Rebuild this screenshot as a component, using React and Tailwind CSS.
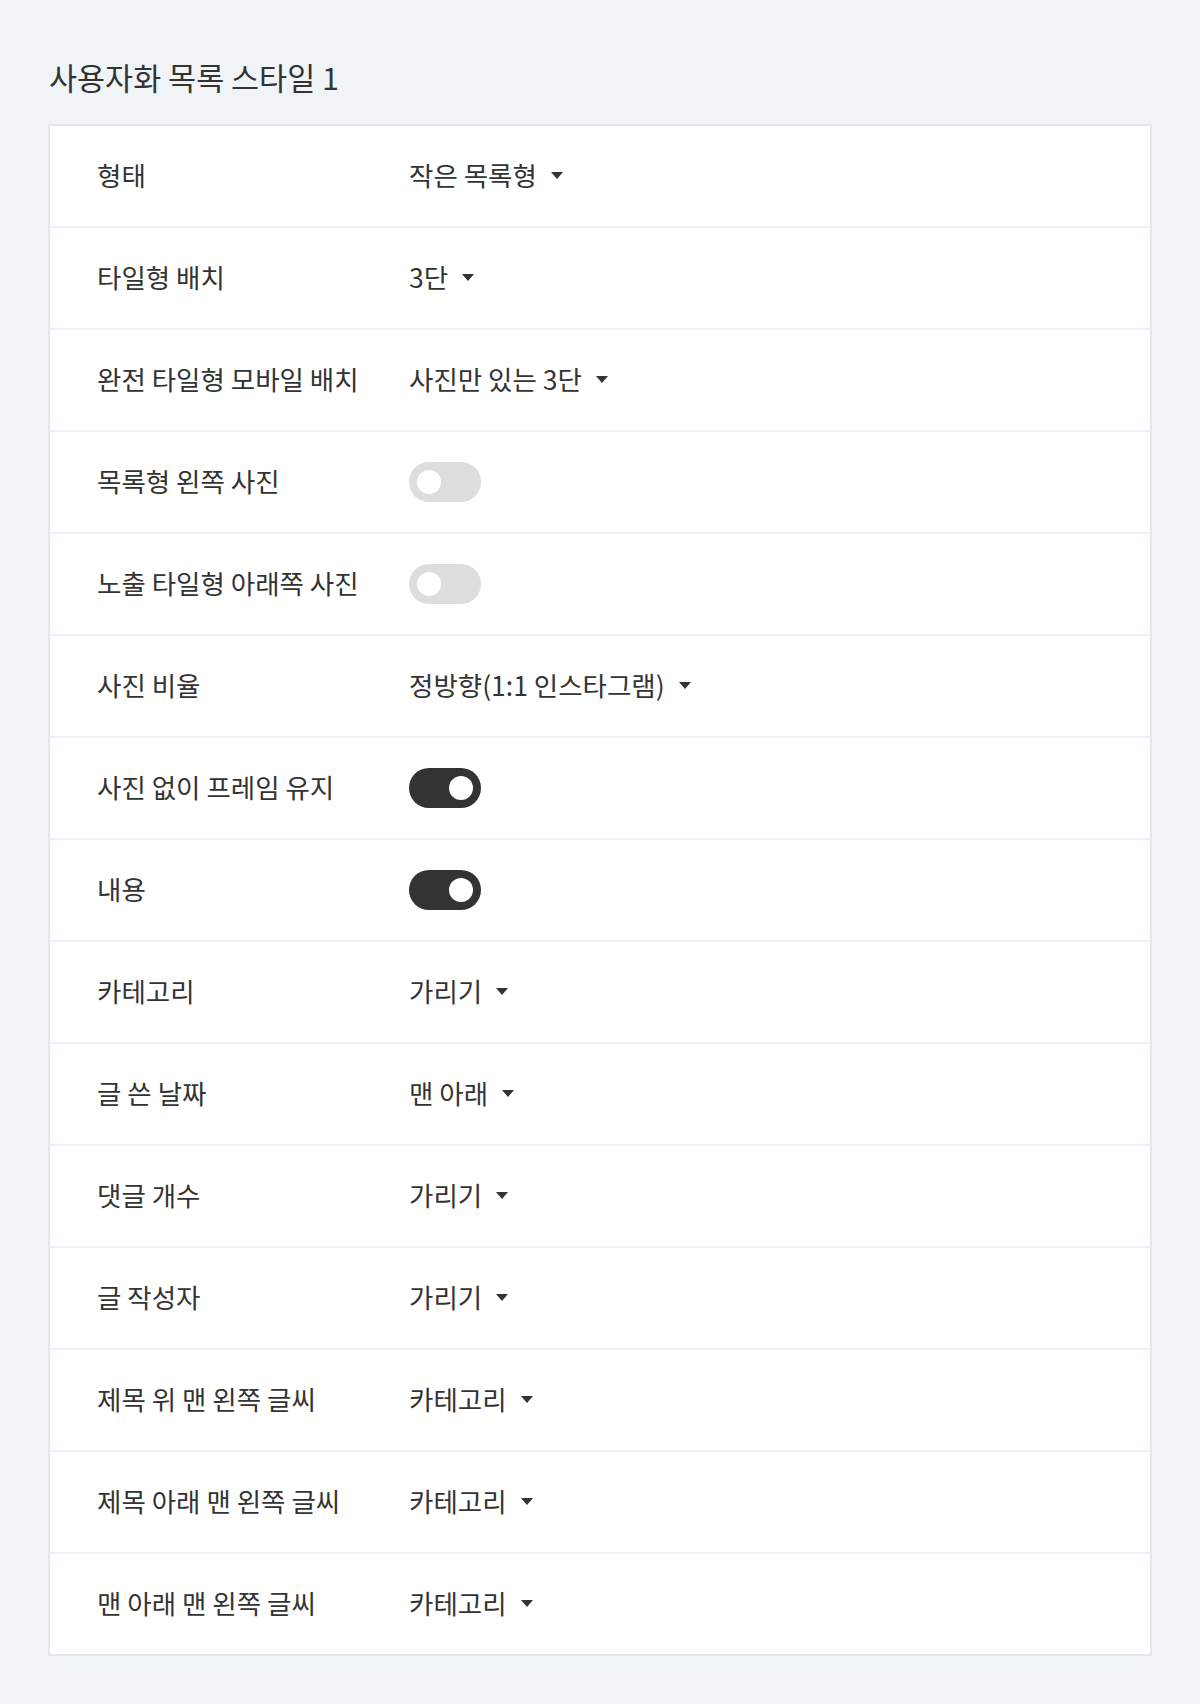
const rows = [
  { label: "형태", type: "select", value: "작은 목록형" },
  { label: "타일형 배치", type: "select", value: "3단" },
  { label: "완전 타일형 모바일 배치", type: "select", value: "사진만 있는 3단" },
  { label: "목록형 왼쪽 사진", type: "toggle", on: false },
  { label: "노출 타일형 아래쪽 사진", type: "toggle", on: false },
  { label: "사진 비율", type: "select", value: "정방향(1:1 인스타그램)" },
  { label: "사진 없이 프레임 유지", type: "toggle", on: true },
  { label: "내용", type: "toggle", on: true },
  { label: "카테고리", type: "select", value: "가리기" },
  { label: "글 쓴 날짜", type: "select", value: "맨 아래" },
  { label: "댓글 개수", type: "select", value: "가리기" },
  { label: "글 작성자", type: "select", value: "가리기" },
  { label: "제목 위 맨 왼쪽 글씨", type: "select", value: "카테고리" },
  { label: "제목 아래 맨 왼쪽 글씨", type: "select", value: "카테고리" },
  { label: "맨 아래 맨 왼쪽 글씨", type: "select", value: "카테고리" },
];

const Caret = () => (
  <svg width="12" height="7" viewBox="0 0 12 7" className="ml-[14px] mt-[2px]">
    <path d="M0 0 H12 L6 7 Z" fill="#333333" />
  </svg>
);

const Toggle = ({ on }) => (
  <div
    className={
      on
        ? "w-[72px] h-[40px] rounded-full bg-[#333333] flex items-center justify-end px-[8px]"
        : "w-[72px] h-[40px] rounded-full bg-[#dddddd] flex items-center justify-start px-[8px]"
    }
  >
    <div className="w-[24px] h-[24px] rounded-full bg-white" />
  </div>
);

const App = () => {
  return (
    <div
      className="min-h-[1704px] bg-[#f0f4f7] px-[48px] pt-[57px] pb-[49px] text-[#333333]"
      style={{ fontFamily: '"Noto Sans CJK KR", "Noto Sans", sans-serif' }}
    >
      <h1 className="text-[30.5px] leading-[40px] font-normal ml-[1px] mb-[27px]">
        사용자화 목록 스타일 1
      </h1>
      <div className="bg-white border-2 border-[#e3e7ee]">
        {rows.map((row, i) => (
          <div
            key={row.label}
            className={
              i < rows.length - 1
                ? "flex items-center h-[102px] border-b-2 border-[#eef2f6] pl-[47px]"
                : "flex items-center h-[100px] pl-[47px]"
            }
          >
            <div className="w-[312px] text-[26.5px] leading-[32px] -mt-[3px]">{row.label}</div>
            {row.type === "select" ? (
              <div className="flex items-center text-[26.5px] leading-[32px] -mt-[3px]">
                <span>{row.value}</span>
                <Caret />
              </div>
            ) : (
              <Toggle on={row.on} />
            )}
          </div>
        ))}
      </div>
    </div>
  );
};

export default App;
